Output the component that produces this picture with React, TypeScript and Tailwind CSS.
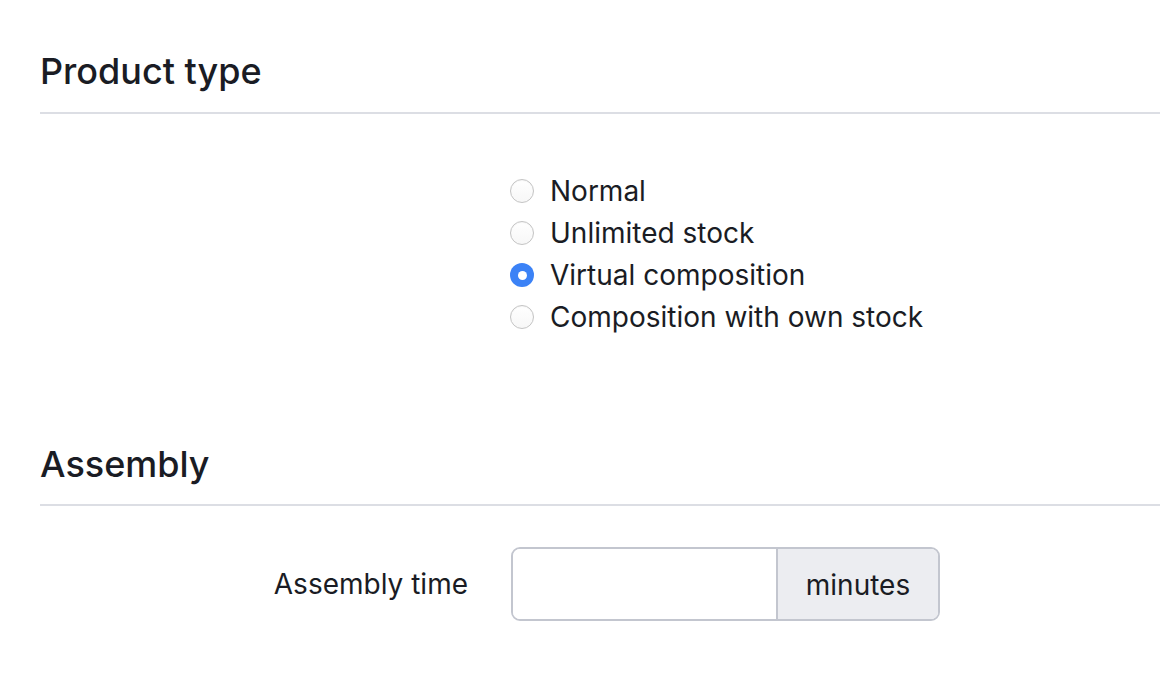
import React from "react";

function Radio({ checked, label }: { checked?: boolean; label: string }) {
  return (
    <label className="flex items-center h-[42px] gap-[16px]">
      {checked ? (
        <span className="w-[24px] h-[24px] rounded-full bg-[#3b82f6] flex items-center justify-center">
          <span className="w-[9px] h-[9px] rounded-full bg-white" />
        </span>
      ) : (
        <span className="w-[24px] h-[24px] rounded-full border border-[#c4c4c4] bg-gradient-to-b from-white to-[#f7f7f7] shadow-[inset_0_1px_1px_rgba(0,0,0,0.04)]" />
      )}
      <span className="text-[28px] leading-[42px] text-[#1a1c24]">{label}</span>
    </label>
  );
}

export default function App() {
  return (
    <div
      className="w-[1160px] h-[698px] bg-white overflow-hidden pl-[40px]"
      style={{ fontFamily: "Inter, 'Noto Sans', sans-serif" }}
    >
      <div className="pt-[50px]">
        <h2 className="text-[36px] leading-[42px] font-medium text-[#1a1c24] pb-[20px] border-b-2 border-[#dcdee4]">
          Product type
        </h2>
      </div>
      <div className="pt-[56px] pl-[470px] flex flex-col">
        <Radio label="Normal" />
        <Radio label="Unlimited stock" />
        <Radio checked label="Virtual composition" />
        <Radio label="Composition with own stock" />
      </div>
      <div className="pt-[105px]">
        <h2 className="text-[36px] leading-[42px] font-medium text-[#1a1c24] pb-[19px] border-b-2 border-[#dcdee4]">
          Assembly
        </h2>
      </div>
      <div className="pt-[41px] flex items-center">
        <div className="w-[428px] text-right text-[28px] text-[#1a1c24]">
          Assembly time
        </div>
        <div className="ml-[43px] flex h-[74px] w-[429px] border-2 border-[#c3c6cf] rounded-[9px] overflow-hidden">
          <div className="w-[263px] bg-white" />
          <div className="flex-1 bg-[#ecedf1] border-l-2 border-[#c3c6cf] flex items-center justify-center text-[28px] text-[#1a1c24] pt-[2px]">
            minutes
          </div>
        </div>
      </div>
    </div>
  );
}
